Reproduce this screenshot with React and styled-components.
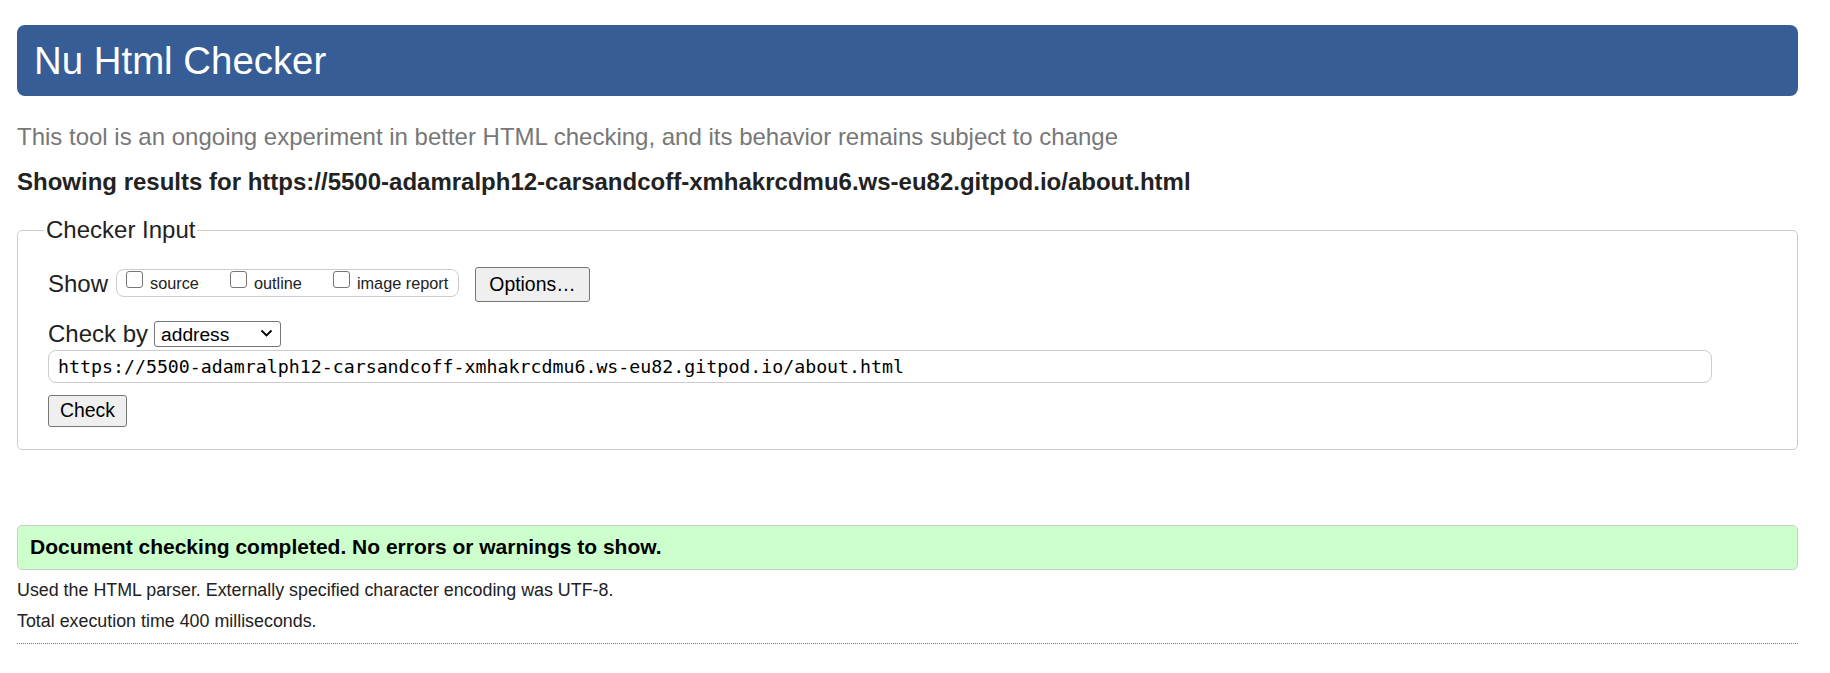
import React from 'react'
import styled, { createGlobalStyle } from 'styled-components'

const GlobalStyle = createGlobalStyle`
  body {
    margin: 0;
    background: #fff;
    font-family: "Liberation Sans", Arial, sans-serif;
    color: #222;
  }
`

const Page = styled.div`
  padding: 25px 32px 30px 17px;
`

const Header = styled.h1`
  margin: 0;
  height: 71px;
  padding-left: 17px;
  background: #365d95;
  border-radius: 8px;
  color: #fff;
  font-size: 38.4px;
  font-weight: 400;
  line-height: 71px;
`

const Intro = styled.p`
  margin: 27px 0 0;
  font-size: 24px;
  line-height: 28px;
  color: #777;
`

const Results = styled.h2`
  margin: 17px 0 0;
  font-size: 24px;
  font-weight: 700;
  line-height: 28px;
`

const Fieldset = styled.fieldset`
  margin: 20px 0 0;
  padding: 0 30px 22px;
  border: 1px solid #ccc;
  border-radius: 5px;
  min-width: 0;
`

const Legend = styled.legend`
  margin-left: -4px;
  padding: 0 2px;
  font-size: 24px;
  line-height: 28px;
`

const FieldBody = styled.div`
  display: flex;
  flex-direction: column;
  align-items: flex-start;
  padding-top: 23px;
`

const Row = styled.div`
  display: flex;
  align-items: center;
  gap: ${(p) => p.$gap || 8}px;
  height: ${(p) => p.$height}px;
  margin-top: ${(p) => p.$top || 0}px;
`

const RowLabel = styled.span`
  font-size: 24px;
  line-height: 28px;
  margin-top: ${(p) => p.$shift || 0}px;
`

const Group = styled.div`
  display: flex;
  align-items: center;
  gap: 31px;
  height: 26px;
  padding: 0 10px 0 9px;
  border: 1px solid #ccc;
  border-radius: 8px;
  margin-top: -4px;
  margin-right: 8px;
`

const Option = styled.label`
  display: flex;
  align-items: center;
  gap: 7px;
  font-size: 16.3px;
  line-height: 20px;
`

const Box = styled.input.attrs({ type: 'checkbox' })`
  appearance: none;
  margin: 0 0 6px;
  width: 17px;
  height: 17px;
  border: 1px solid #767676;
  border-radius: 3px;
  background: #fff;
`

const Button = styled.button`
  height: ${(p) => p.$height}px;
  padding: 0 ${(p) => p.$pad}px;
  margin-top: ${(p) => p.$top || 0}px;
  border: 1px solid #767676;
  border-radius: 3px;
  background: #efefef;
  color: #000;
  font-family: "Liberation Sans", Arial, sans-serif;
  font-size: 19.4px;
  line-height: 1;
`

const SelectWrap = styled.div`
  position: relative;
  display: flex;
`

const Select = styled.select`
  appearance: none;
  width: 127px;
  height: 26px;
  padding: 0 0 0 6px;
  border: 1px solid #767676;
  border-radius: 3px;
  background: #fff;
  color: #000;
  font-family: "Liberation Sans", Arial, sans-serif;
  font-size: 19.2px;
`

const Chevron = styled.svg`
  position: absolute;
  right: 8px;
  top: 8px;
  pointer-events: none;
`

const UrlInput = styled.input`
  box-sizing: border-box;
  width: 1664px;
  height: 32.5px;
  margin-top: 3px;
  padding: 0 9px;
  border: 1px solid #ccc;
  border-radius: 8px;
  font-family: "DejaVu Sans Mono", "Liberation Mono", monospace;
  font-size: 18.25px;
  color: #000;
`

const Success = styled.div`
  box-sizing: border-box;
  margin-top: 75px;
  height: 45px;
  padding-left: 12px;
  display: flex;
  align-items: center;
  background: #ccffcc;
  border: 1px solid #ccc;
  border-radius: 5px;
  font-size: 21px;
  font-weight: 700;
  color: #000;
`

const Note = styled.p`
  margin: ${(p) => p.$top}px 0 0;
  font-size: 17.85px;
  line-height: 22px;
  color: #222;
`

const Rule = styled.hr`
  margin: 11px 0 0;
  border: 0;
  border-top: 1px dotted #777;
`

const url =
  'https://5500-adamralph12-carsandcoff-xmhakrcdmu6.ws-eu82.gitpod.io/about.html'

const showOptions = ['source', 'outline', 'image report']

export default function App() {
  return (
    <>
      <GlobalStyle />
      <Page>
        <Header>Nu Html Checker</Header>
        <Intro>
          This tool is an ongoing experiment in better HTML checking, and its
          behavior remains subject to change
        </Intro>
        <Results>Showing results for {url}</Results>

        <Fieldset>
          <Legend>Checker Input</Legend>
          <FieldBody>
            <Row $height={35}>
              <RowLabel $shift={-2}>Show</RowLabel>
              <Group>
                {showOptions.map((name) => (
                  <Option key={name}>
                    <Box />
                    {name}
                  </Option>
                ))}
              </Group>
              <Button $height={35} $pad={13}>
                Options…
              </Button>
            </Row>
            <Row $height={26} $top={19} $gap={6}>
              <RowLabel>Check by</RowLabel>
              <SelectWrap>
                <Select defaultValue="address">
                  <option value="address">address</option>
                  <option value="file">file upload</option>
                  <option value="text">text input</option>
                </Select>
                <Chevron width="13" height="9" viewBox="0 0 13 9">
                  <path
                    d="M1.5 1.5 L6.5 6.5 L11.5 1.5"
                    fill="none"
                    stroke="#000"
                    strokeWidth="1.8"
                  />
                </Chevron>
              </SelectWrap>
            </Row>
            <UrlInput defaultValue={url} />
            <Button $height={31.5} $pad={11} $top={12.5}>
              Check
            </Button>
          </FieldBody>
        </Fieldset>

        <Success>Document checking completed. No errors or warnings to show.</Success>
        <Note $top={9}>
          Used the HTML parser. Externally specified character encoding was
          UTF-8.
        </Note>
        <Note $top={9}>Total execution time 400 milliseconds.</Note>
        <Rule />
      </Page>
    </>
  )
}
